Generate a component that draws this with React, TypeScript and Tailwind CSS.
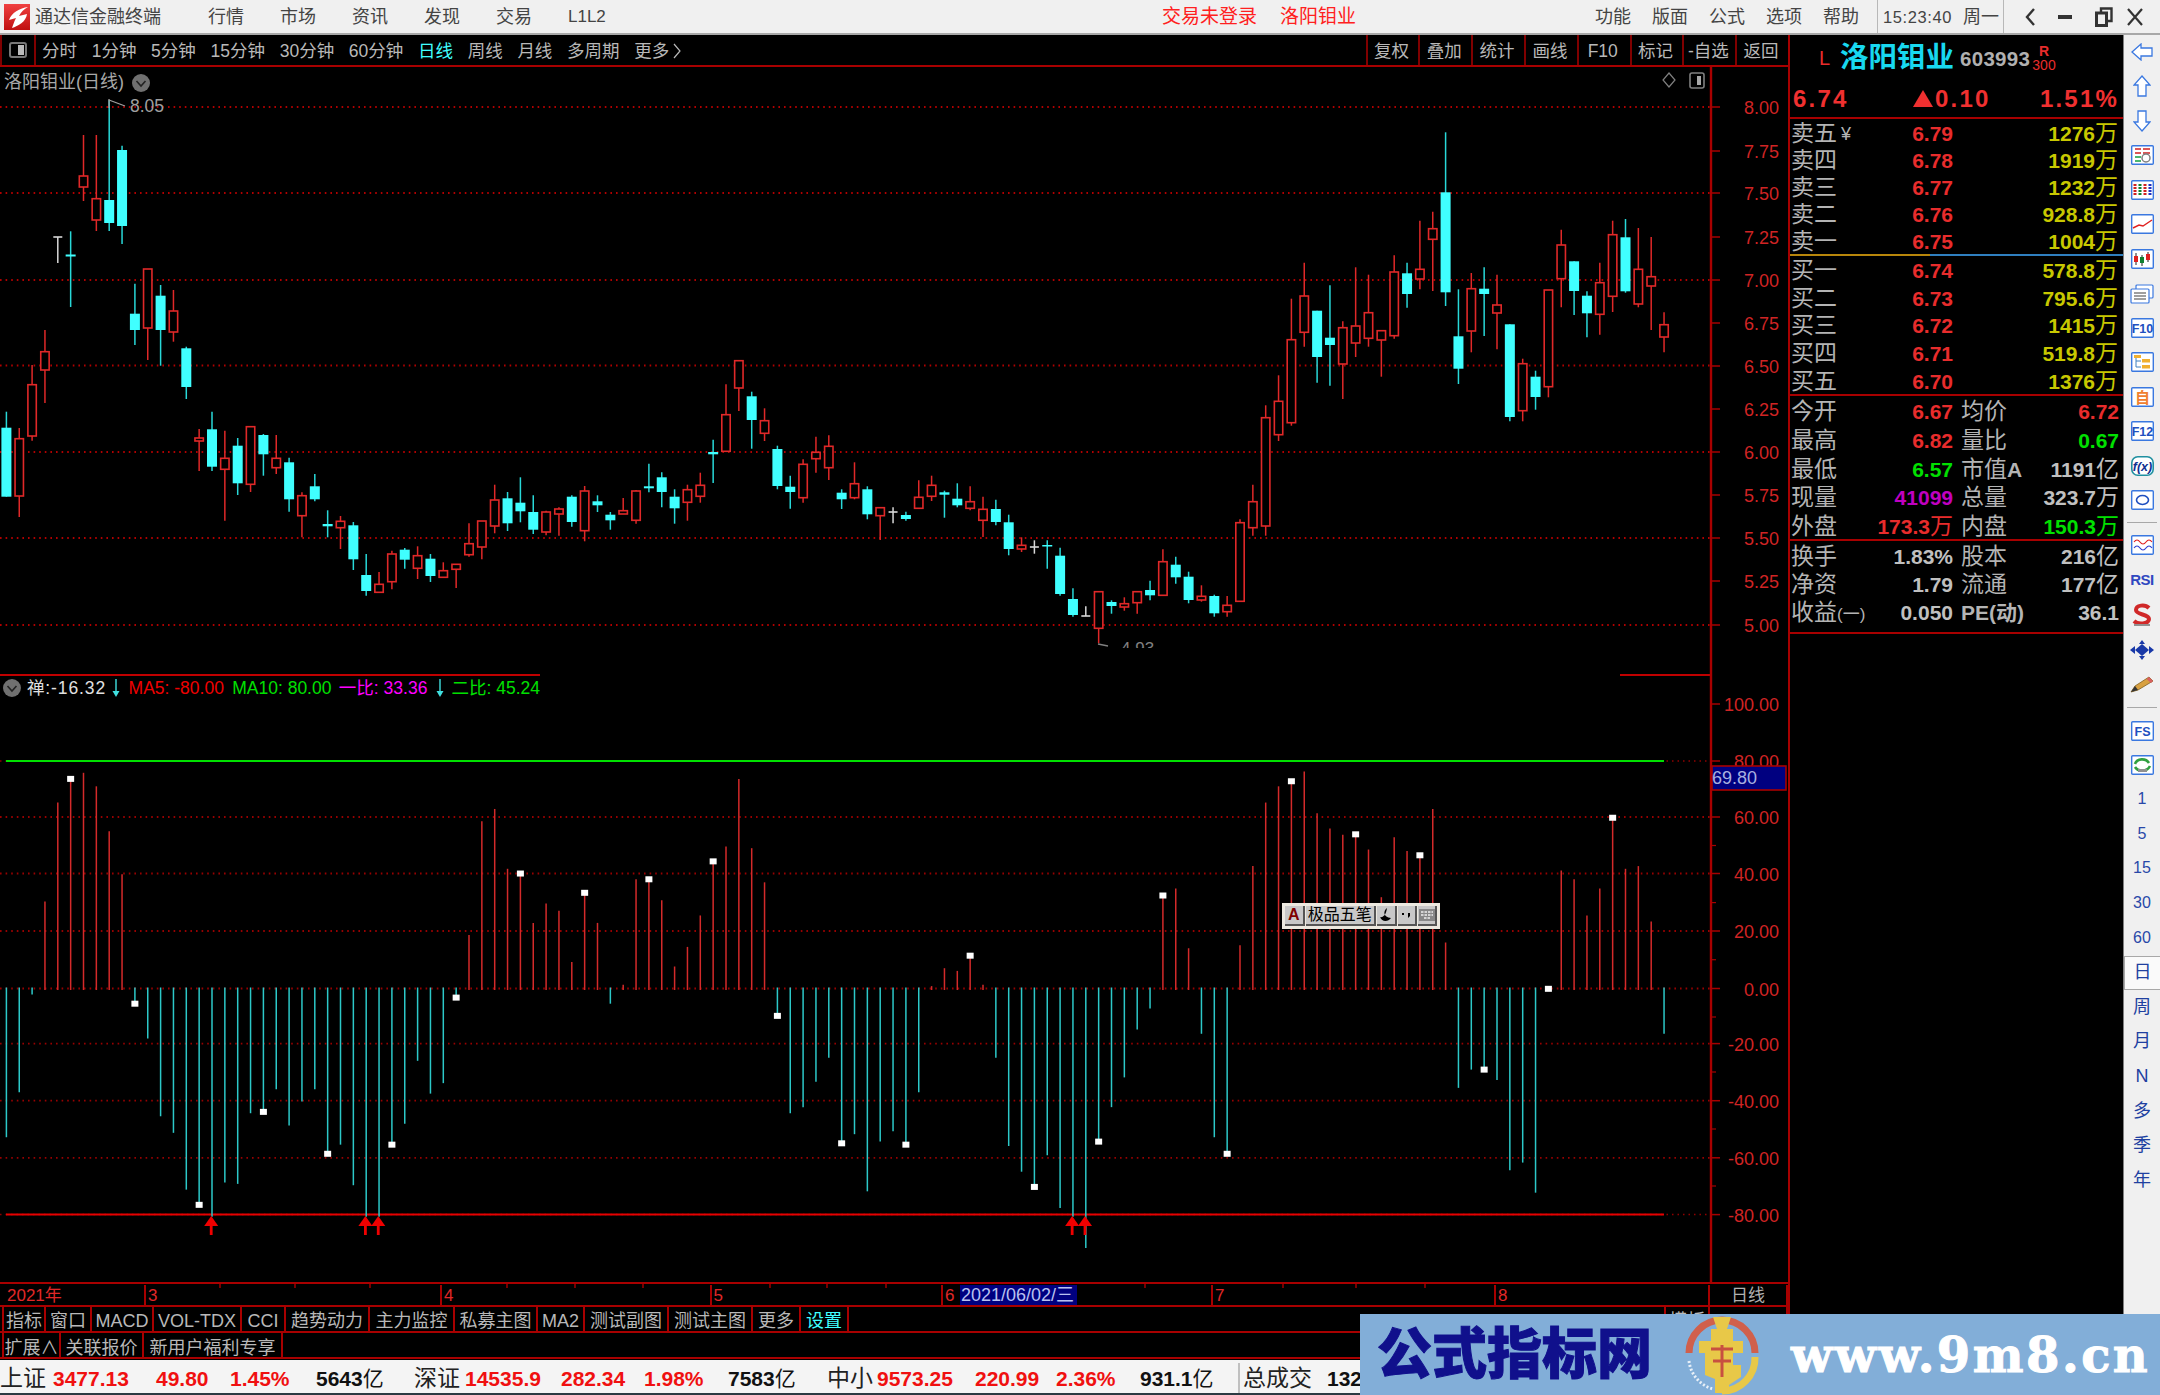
import type { ReactNode } from "react";

// candle rows: kind (c = cyan solid, r = red hollow, w = white doji), body top, body bottom, high, low
type Candle = ["c" | "r" | "w", number, number, number, number];
const candles: Candle[] = [
  ["c", 427.7, 496.7, 411.7, 496.7], ["r", 438.7, 496, 428, 517], ["r", 384.7, 436, 365, 440.7], ["r", 351.7, 370, 330, 403],
  ["w", 237, 237, 237, 263], ["c", 254.5, 256.5, 231.3, 307], ["r", 176, 187, 135, 201], ["r", 198.7, 220, 135, 231],
  ["c", 200, 223, 100, 231], ["c", 150, 226, 145.7, 244], ["c", 313.7, 330, 283.7, 345], ["r", 269, 328, 269, 360],
  ["c", 295.7, 330, 285, 365.7], ["r", 311, 332, 290, 341.7], ["c", 348.3, 387, 346.7, 399], ["r", 438, 441, 429, 471],
  ["c", 429.3, 466.7, 411.7, 471], ["r", 458.3, 469.3, 430.7, 520.7], ["c", 445.7, 483.3, 438, 495], ["r", 426.7, 484.3, 426.7, 492],
  ["c", 435, 454.3, 434, 475.7], ["r", 458.3, 467.7, 435, 474], ["c", 462.3, 499.3, 457.7, 511.7], ["r", 495.7, 515.7, 492.3, 537.3],
  ["c", 486.3, 499.3, 474, 501.3], ["c", 524, 526.3, 510.3, 537.3], ["r", 521.3, 527.7, 516, 549], ["c", 525.3, 559.3, 522, 570],
  ["c", 575, 591, 554, 595.7], ["r", 584.3, 592.3, 572, 592.3], ["r", 554, 581.7, 550.7, 589.3], ["c", 549.7, 559.7, 548, 568.7],
  ["r", 555.7, 568.3, 546.3, 579], ["c", 558.7, 576, 554, 582], ["r", 570.7, 577.3, 562.3, 577.3], ["r", 564.3, 569.3, 564.3, 588],
  ["r", 543.7, 554.7, 523.3, 556.7], ["r", 521, 547, 521, 559.3], ["r", 500, 526, 484.7, 533.3], ["c", 498.3, 523.3, 492, 531],
  ["c", 502.7, 511.3, 477.3, 522.3], ["c", 512, 529.7, 495.3, 534], ["r", 512, 532, 510.7, 535.3], ["r", 509, 514, 507.3, 535.7],
  ["c", 496.7, 522, 495.3, 526.7], ["r", 491, 530.7, 486, 541.3], ["c", 501.3, 505.3, 495.3, 512], ["c", 514.7, 520.3, 512, 529.7],
  ["r", 510.7, 514, 498, 514], ["r", 491, 520.3, 490, 523.7], ["c", 486.3, 488.3, 463.7, 492.3], ["c", 477.3, 492, 472.3, 507.3],
  ["c", 496.7, 508.3, 489.3, 523.7], ["r", 489.7, 502.3, 484.7, 520.7], ["r", 485.3, 496.3, 472.7, 502.7], ["c", 452, 454.3, 439.7, 483],
  ["r", 414.7, 451.3, 384.3, 451.3], ["r", 360.7, 388, 360.7, 411], ["c", 396.3, 420, 391.7, 448.7], ["r", 420.7, 433.3, 408.3, 441],
  ["c", 449, 486, 445.7, 489.3], ["c", 486.7, 492, 475.7, 508.7], ["r", 464.3, 497.7, 459.3, 502.7], ["r", 452.3, 458.7, 436.7, 472.7],
  ["r", 446.3, 467.7, 435.3, 480], ["c", 492.7, 499.3, 489.3, 509], ["r", 483.7, 497.7, 462.3, 499.3], ["c", 489.3, 514.3, 486.3, 519.3],
  ["r", 507.7, 515.7, 507.7, 540], ["w", 512, 512, 507.3, 523.3], ["c", 515, 519, 511.7, 520.7], ["r", 497.3, 508.3, 480.3, 508.3],
  ["r", 485.3, 496.3, 475.7, 501], ["c", 492.3, 494.7, 490.7, 517.7], ["c", 498.7, 505.3, 483.3, 507.3], ["r", 501.7, 508.3, 486.3, 510.3],
  ["r", 509.3, 520.3, 496.7, 537], ["c", 509, 522, 499.7, 525.3], ["c", 522.3, 549, 514.7, 555.3], ["r", 545.3, 549, 537.3, 552],
  ["w", 547, 547, 540.3, 553.7], ["c", 545, 546.5, 540.3, 568.7], ["c", 555.7, 594, 547.7, 595.7], ["c", 599, 615, 588.3, 616.7],
  ["w", 616, 616, 606.3, 616], ["r", 591.7, 628.3, 591.7, 643.3], ["c", 602, 606, 600.3, 613.7], ["r", 603.7, 607, 597.3, 610.7],
  ["r", 591.7, 602.7, 591.7, 613.7], ["c", 590, 595.3, 580.7, 600.3], ["r", 561.7, 595.3, 549.3, 595.3], ["c", 564.7, 577.3, 556.7, 583.7],
  ["c", 576.7, 600, 571.7, 603.3], ["r", 596.3, 600, 585.3, 601.7], ["c", 596, 613.3, 594.7, 616.7], ["r", 605.3, 611.7, 596, 616.7],
  ["r", 522.7, 601.3, 519.3, 601.3], ["r", 501.7, 527.7, 484.7, 535.7], ["r", 417.7, 526, 405.3, 535.7], ["r", 401.3, 434.7, 375.3, 441],
  ["r", 339.7, 422.7, 298.7, 425.7], ["r", 296, 332.3, 262.7, 346.7], ["c", 310.7, 357, 310.7, 382.7], ["c", 337.7, 345, 285.3, 385.7],
  ["r", 327.7, 364, 321.3, 399], ["r", 326, 343, 267.3, 357], ["r", 312.7, 338.3, 274.7, 346.7], ["r", 330.7, 340, 330.7, 376.7],
  ["r", 272, 335.7, 255.3, 338.7], ["c", 273.3, 294, 262.7, 307.7], ["r", 269.3, 279, 220.7, 289.3], ["r", 228.7, 239.3, 211.7, 291],
  ["c", 192.3, 292.3, 132.3, 306], ["c", 336.3, 368.7, 289.3, 384], ["r", 288.7, 331, 273, 352.3], ["c", 288.7, 294, 267.3, 336],
  ["r", 305, 313, 274.7, 349.3], ["c", 324.3, 417, 324.3, 421.3], ["r", 363.7, 410.7, 358.7, 421.3], ["c", 376.7, 397, 370.7, 409.7],
  ["r", 290, 386.7, 290, 397.3], ["r", 245, 278.7, 229.7, 307.3], ["c", 261.3, 291, 261.3, 315], ["c", 295.7, 313.3, 291.3, 337.3],
  ["r", 282.7, 314.3, 262.7, 334.7], ["r", 234.7, 296.3, 220.7, 312], ["c", 237.3, 291.3, 219, 292.7], ["r", 269.3, 304, 228, 307.3],
  ["r", 276.7, 286, 237, 330], ["r", 324.7, 337, 312.3, 352.3],
];

// lower pane: bar tips measured off the picture, 735 is the zero line
const tips = [
  1175, 1042, 753, 478, 185, 115, 97, 137, 270, 397, 780, 883, 1113, 1162, 1330, 1375, 1410, 1309, 1313, 1104,
  1100, 1033, 1140, 1069, 1033, 1224, 1197, 1317, 1410, 1410, 1197, 1135, 949, 1046, 1015, 762, 577, 240, 204, 381,
  395, 541, 484, 505, 657, 452, 541, 780, 724, 412, 412, 474, 670, 612, 519, 359, 315, 115, 320, 421,
  816, 1104, 1086, 1011, 940, 1193, 1166, 1335, 1188, 1157, 1197, 1042, 728, 675, 683, 638, 724, 940, 1201, 1277,
  1322, 1228, 1384, 1410, 1503, 1188, 1086, 998, 856, 794, 460, 439, 616, 869, 1175, 1224, 607, 373, 185, 137,
  122, 93, 217, 262, 280, 279, 324, 465, 288, 328, 341, 204, 599, 1029, 975, 975, 1006, 1273, 1250, 1339,
  736, 386, 412, 519, 439, 230, 381, 373, 537, 869,
];
const marked = [5, 10, 15, 20, 25, 30, 35, 40, 45, 50, 55, 60, 65, 70, 75, 80, 85, 90, 95, 100, 105, 110, 115, 120, 125];
const arrows = [16, 28, 29, 83, 84];

const barX = (i: number) => 6.4 + 12.85 * i;
const subY = (v: number) => 740 + v / 2.958;

const priceAxis = [
  ["8.00", 107], ["7.75", 151], ["7.50", 193], ["7.25", 237], ["7.00", 280], ["6.75", 323], ["6.50", 366],
  ["6.25", 409], ["6.00", 452], ["5.75", 495], ["5.50", 538], ["5.25", 581], ["5.00", 625],
] as const;
const subAxis = [
  ["100.00", 704], ["80.00", 761], ["60.00", 817], ["40.00", 873.5], ["20.00", 931], ["0.00", 988.5],
  ["-20.00", 1043.6], ["-40.00", 1100.7], ["-60.00", 1157.8], ["-80.00", 1214.6],
] as const;
const priceGrid = [107, 193, 280, 365.5, 452, 538, 625];
const subGrid = [817, 873.5, 931, 988.5, 1043.6, 1100.7, 1157.8];
const subMinor = [845.5, 902.6, 959.7, 1017, 1072, 1129, 1186];

const RED = "#e02828";
const CYAN = "#40ffff";
const DARK = "#a80000";

function Chart() {
  return (
    <svg className="absolute inset-0 h-full w-full" viewBox="0 67 1788 1215">
      <defs>
        <clipPath id="lowClip"><rect x="1090" y="630" width="80" height="18" /></clipPath>
      </defs>
      {priceGrid.map((y) => (
        <line key={y} x1="0" x2="1711" y1={y} y2={y} stroke="#b00000" strokeWidth="1.8" strokeDasharray="1.6 4" />
      ))}
      {subGrid.map((y) => (
        <line key={y} x1="0" x2="1711" y1={y} y2={y} stroke="#980000" strokeWidth="1.8" strokeDasharray="1.6 4" />
      ))}
      <line x1="0" x2="1711" y1="761" y2="761" stroke="#900000" strokeWidth="1.5" strokeDasharray="1.5 4" />
      <line x1="0" x2="1711" y1="1214.6" y2="1214.6" stroke="#900000" strokeWidth="1.5" strokeDasharray="1.5 4" />

      {/* candles */}
      {candles.map(([kind, top, bot, hi, lo], i) => {
        const x = barX(i);
        const wick = kind === "c" ? "#28d8d8" : kind === "r" ? RED : "#d8d8d8";
        return (
          <g key={i}>
            <line x1={x} x2={x} y1={hi} y2={lo} stroke={wick} strokeWidth="1.5" />
            {kind === "c" && <rect x={x - 5} y={top} width="10" height={bot - top} fill={CYAN} />}
            {kind === "r" && <rect x={x - 4.2} y={top} width="8.4" height={bot - top} fill="#000" stroke={RED} strokeWidth="1.6" />}
            {kind === "w" && <line x1={x - 4.5} x2={x + 4.5} y1={top} y2={top} stroke="#d8d8d8" strokeWidth="1.6" />}
          </g>
        );
      })}

      {/* high / low notes */}
      <path d="M109 108 L109 99 M109 100 L125 106" stroke="#a0a0a0" strokeWidth="1.3" fill="none" />
      <text x="130" y="112" fontSize="17.5" fill="#a0a0a0">8.05</text>
      <g clipPath="url(#lowClip)">
        <text x="1121" y="654" fontSize="17" fill="#808080">4.93</text>
        <line x1="1098" x2="1108" y1="644" y2="646" stroke="#808080" strokeWidth="1.3" />
      </g>

      {/* chart corner buttons */}
      <path d="M1669 73 L1675 80 L1669 87 L1663 80 Z" fill="none" stroke="#808080" strokeWidth="1.2" />
      <rect x="1690" y="73" width="14" height="15" rx="2" fill="none" stroke="#808080" strokeWidth="1.6" />
      <rect x="1697" y="76" width="4" height="9" fill="#a8a8a8" />

      {/* pane separator */}
      <line x1="0" x2="540" y1="675" y2="675" stroke="#c00000" strokeWidth="2" />
      <line x1="1620" x2="1711" y1="675" y2="675" stroke="#c00000" strokeWidth="2" />

      {/* lower pane */}
      <line x1="6" x2="1664" y1="761" y2="761" stroke="#00e000" strokeWidth="2" />
      <line x1="6" x2="1664" y1="1214.6" y2="1214.6" stroke="#e60000" strokeWidth="2" />
      {tips.map((v, i) => {
        const x = barX(i);
        const up = v < 735;
        return (
          <line key={i} x1={x} x2={x} y1={up ? 990 : 987.5} y2={subY(v)} stroke={up ? "#d42a2a" : "#2cc8c8"} strokeWidth="1.5" />
        );
      })}
      {marked.map((i) => (
        <rect key={i} x={barX(i) - 3.5} y={subY(tips[i]) - 3} width="7" height="6" fill="#fff" />
      ))}
      {arrows.map((i) => {
        const x = barX(i) - 0.8;
        return (
          <g key={i} fill="#f00000">
            <path d={`M${x} 1216 L${x + 7} 1226 L${x - 7} 1226 Z`} />
            <rect x={x - 1.4} y="1225" width="2.8" height="10" />
          </g>
        );
      })}

      {/* axes */}
      <line x1="1711" x2="1711" y1="67" y2="1282" stroke={DARK} strokeWidth="2.4" />
      {priceAxis.map(([t, y]) => (
        <g key={t}>
          <line x1="1711" x2="1720" y1={y} y2={y} stroke={DARK} strokeWidth="1.5" />
          <text x="1779" y={y + 7} fontSize="18" textAnchor="end" fill="#d02424">{t}</text>
        </g>
      ))}
      {subAxis.map(([t, y]) => (
        <g key={t}>
          <line x1="1711" x2="1720" y1={y} y2={y} stroke={DARK} strokeWidth="1.5" />
          <text x="1779" y={y + 7} fontSize="18" textAnchor="end" fill="#d02424">{t}</text>
        </g>
      ))}
      {subMinor.map((y) => (
        <line key={y} x1="1711" x2="1716" y1={y} y2={y} stroke={DARK} strokeWidth="1.2" />
      ))}
      <rect x="1712" y="766" width="74" height="24" fill="#000080" stroke={DARK} strokeWidth="1.6" />
      <text x="1712" y="784" fontSize="18" fill="#a8b0e0">69.80</text>
    </svg>
  );
}

function Chevron() {
  return (
    <svg width="18" height="18" viewBox="0 0 18 18">
      <circle cx="9" cy="9" r="9" fill="#707070" />
      <path d="M4.5 7 L9 12 L13.5 7" fill="none" stroke="#222" strokeWidth="1.6" />
    </svg>
  );
}

function DownTick() {
  return (
    <svg width="8" height="20" viewBox="0 0 8 20">
      <path d="M4 1 V14" stroke="#40e0e0" strokeWidth="1.4" />
      <path d="M0.5 13 H7.5 L4 19 Z" fill="#40e0e0" />
    </svg>
  );
}

function ImeBar() {
  const key = "flex h-full items-center justify-center border-r-2 border-b-2 border-r-[#555] border-b-[#555] bg-[#c8c8c8]";
  return (
    <div className="absolute left-[1282px] top-[836px] flex h-[26px] w-[158px] gap-[1px] border-[3px] border-[#ece9e0] bg-[#ece9e0] text-[16px] text-black">
      <div className={`${key} w-[20px] font-bold text-[#800000]`}>A</div>
      <div className={`${key} w-[71px]`}>极品五笔</div>
      <div className={`${key} w-[20px]`}>
        <svg width="12" height="14" viewBox="0 0 12 14"><path d="M7 0 C3 3 3 9 11 10 C8 14 2 14 0 9 C2 10 6 8 7 0Z" fill="#000" /></svg>
      </div>
      <div className={`${key} w-[20px]`}>
        <svg width="10" height="10" viewBox="0 0 10 10"><rect x="1" y="3" width="2" height="2" fill="#000" /><path d="M7 3 h2 v3 l-2 2Z" fill="#000" /></svg>
      </div>
      <div className={`${key} w-[19px]`}>
        <svg width="16" height="12" viewBox="0 0 16 12">
          <rect width="16" height="12" fill="#888" />
          <path d="M2 3 H14 M2 6 H14 M5 9 H11" stroke="#eee" strokeWidth="1.4" strokeDasharray="2.5 1" />
        </svg>
      </div>
    </div>
  );
}

function TitleBar() {
  return (
    <div className="flex h-[35px] items-center border-b-2 border-[#a8a8a8] bg-[#f0f0f0] text-[18px] text-[#444]">
      <div className="flex w-[1162px] items-center">
        <svg className="ml-[4px]" width="26" height="26" viewBox="0 0 26 26">
          <defs>
            <linearGradient id="logoRed" x1="0" y1="0" x2="0" y2="1">
              <stop offset="0" stopColor="#f04040" />
              <stop offset="1" stopColor="#c01010" />
            </linearGradient>
          </defs>
          <rect width="26" height="26" fill="url(#logoRed)" />
          <path d="M24 3 C16 4 7 9 5 16 L12 14 C10 18 9 21 8 24 C14 22 22 18 23 10 L15 12 C17 8 20 5 24 3Z" fill="#fff" />
        </svg>
        <span className="ml-[5px] mt-[2px] w-[127px]">通达信金融终端</span>
        <div className="ml-[46px] mt-[2px] flex gap-[36px]">
          <span>行情</span><span>市场</span><span>资讯</span><span>发现</span><span>交易</span><span className="text-[17px]">L1L2</span>
        </div>
      </div>
      <div className="mt-[2px] flex w-[433px] gap-[23px] text-[19px] text-[#ff2020]">
        <span>交易未登录</span><span>洛阳钼业</span>
      </div>
      <div className="mt-[2px] flex gap-[21px]">
        <span>功能</span><span>版面</span><span>公式</span><span>选项</span><span>帮助</span>
      </div>
      <div className="ml-[18px] flex h-full items-center border-x border-[#b8b8b8] pl-[5px] pr-[4px] pt-[2px]">
        <span className="w-[80px] text-[16.5px] tracking-[0.6px]">15:23:40</span>
        <span>周一</span>
      </div>
      <svg className="ml-[20px]" width="12" height="20" viewBox="0 0 12 20"><path d="M10 2 L3 10 L10 18" fill="none" stroke="#333" strokeWidth="2.4" /></svg>
      <svg className="ml-[22px]" width="14" height="4" viewBox="0 0 14 4"><rect width="14" height="4" fill="#333" /></svg>
      <svg className="ml-[23px]" width="18" height="20" viewBox="0 0 18 20">
        <path d="M6 5 V1.5 H16.5 V14 H12" fill="none" stroke="#333" strokeWidth="2.4" />
        <rect x="1.5" y="6" width="10" height="12.5" fill="none" stroke="#333" strokeWidth="3" />
      </svg>
      <svg className="ml-[14px]" width="16" height="20" viewBox="0 0 16 20"><path d="M1 2 L15 18 M15 2 L1 18" stroke="#333" strokeWidth="2.2" /></svg>
    </div>
  );
}

const rightTools = ["复权", "叠加", "统计", "画线", "F10", "标记", "-自选", "返回"];

function Toolbar() {
  return (
    <div className="flex h-[32px] items-center border-b-2 border-[#a80000] text-[17.5px] text-[#b8b8b8]">
      <div className="flex h-full w-[36px] items-center justify-center border-x-2 border-[#800000]">
        <div className="flex h-[16px] w-[18px] justify-end rounded-[3px] border-2 border-[#777] pr-[1px] pt-[1px]">
          <div className="h-[10px] w-[6px] bg-[#bbb]" />
        </div>
      </div>
      <div className="ml-[6px] mt-[2px] flex items-center gap-[14.7px]">
        <span>分时</span><span>1分钟</span><span>5分钟</span><span>15分钟</span><span>30分钟</span><span>60分钟</span>
        <span className="text-[#40ffff]">日线</span><span>周线</span><span>月线</span><span>多周期</span>
        <span className="flex items-center gap-[4px]">
          更多
          <svg width="8" height="16" viewBox="0 0 8 16"><path d="M1 1 L7 8 L1 15" fill="none" stroke="#b8b8b8" strokeWidth="1.2" /></svg>
        </span>
      </div>
      <div className="ml-auto flex h-full">
        {rightTools.map((t) => (
          <div key={t} className="flex h-full w-[52.8px] items-center justify-center border-l-2 border-[#800000] pr-[3px] pt-[2px]">{t}</div>
        ))}
      </div>
    </div>
  );
}

function TimeAxis() {
  return (
    <div className="relative flex h-[25px] border-y-2 border-[#a80000] pt-[1px] text-[17px] leading-[21px] text-[#e02828]">
      <div className="w-[146px] border-r-2 border-[#a80000] pl-[7px]">2021年</div>
      <div className="w-[296px] border-r-2 border-[#a80000] pl-[2px]">3</div>
      <div className="w-[269.6px] border-r-2 border-[#a80000] pl-[2px]">4</div>
      <div className="w-[231.4px] border-r-2 border-[#a80000] pl-[2px]">5</div>
      <div className="w-[17px] pl-[2px]">6</div>
      <div className="w-[117px] whitespace-nowrap bg-[#000080] pl-[1px] text-[18px] text-[#b8c0f0]">2021/06/02/三</div>
      <div className="w-[136px] border-r-2 border-[#a80000]" />
      <div className="w-[283px] border-r-2 border-[#a80000] pl-[2px]">7</div>
      <div className="w-[214px] border-r-2 border-[#a80000] pl-[2px]">8</div>
      <div className="flex w-[78px] justify-center border-r-2 border-[#a80000] text-[#b0b0b0]">日线</div>
      <svg className="absolute left-0 top-0 h-[4px] w-[1500px]" viewBox="0 0 1500 4">
        {[220, 295, 370, 507, 575, 643, 770, 827, 886, 1145, 1283, 1356, 1425].map((x) => (
          <line key={x} x1={x} x2={x} y1="0" y2="4" stroke="#a80000" strokeWidth="1.4" />
        ))}
      </svg>
    </div>
  );
}

const tabRow1 = [
  { t: "指标", w: "w-[42px]" }, { t: "窗口", w: "w-[46px]" }, { t: "MACD", w: "w-[62px]" }, { t: "VOL-TDX", w: "w-[88px]" },
  { t: "CCI", w: "w-[44px]" }, { t: "趋势动力", w: "w-[84px]" }, { t: "主力监控", w: "w-[85px]" }, { t: "私募主图", w: "w-[83px]" },
  { t: "MA2", w: "w-[47px]" }, { t: "测试副图", w: "w-[84px]" }, { t: "测试主图", w: "w-[84px]" }, { t: "更多", w: "w-[48px]" },
];
const tabRow2 = [
  { t: "扩展∧", w: "w-[57px]" }, { t: "关联报价", w: "w-[83px]" }, { t: "新用户福利专享", w: "w-[139px]" },
];

function Tabs() {
  const cell = "flex h-full items-center justify-center border-r-2 border-[#a80000] overflow-hidden whitespace-nowrap";
  return (
    <div className="text-[18px] text-[#b8b8b8]">
      <div className="flex h-[26px] border-b-2 border-[#a80000] pl-[2px]">
        <div className="h-full w-0 border-l-2 border-[#a80000]" />
        {tabRow1.map((c) => (
          <div key={c.t} className={`${cell} ${c.w} pt-[4px]`}>{c.t}</div>
        ))}
        <div className={`${cell} w-[48px] pt-[4px] text-[#40ffff]`}>设置</div>
        <div className={`${cell} ml-auto w-[46px] border-l-2 pt-[4px]`}>模板</div>
        <div className={`${cell} w-[78px] pt-[4px]`}>+</div>
      </div>
      <div className="flex h-[26px] border-b-2 border-[#a80000] pl-[2px]">
        <div className="h-full w-0 border-l-2 border-[#a80000]" />
        {tabRow2.map((c) => (
          <div key={c.t} className={`${cell} ${c.w} pt-[6px]`}>{c.t}</div>
        ))}
      </div>
    </div>
  );
}

function Unit({ n, u }: { n: string; u: string }) {
  return (
    <>
      {n}
      <span className="text-[23px] font-normal">{u}</span>
    </>
  );
}

const asks = [
  ["卖五", "6.79", "1276"], ["卖四", "6.78", "1919"], ["卖三", "6.77", "1232"], ["卖二", "6.76", "928.8"], ["卖一", "6.75", "1004"],
];
const bids = [
  ["买一", "6.74", "578.8"], ["买二", "6.73", "795.6"], ["买三", "6.72", "1415"], ["买四", "6.71", "519.8"], ["买五", "6.70", "1376"],
];

function QuoteRow({ row, extra }: { row: string[]; extra?: ReactNode }) {
  return (
    <div className="flex h-[27px] items-center pl-[1px] pr-[5px] pt-[2px] leading-none">
      <span className="flex w-[62px] items-center whitespace-nowrap text-[23px] text-[#b4b4b4]">{row[0]}{extra}</span>
      <span className="w-[100px] text-right text-[21px] font-bold text-[#e82c2c]">{row[1]}</span>
      <span className="flex-1 text-right text-[21px] font-bold text-[#c8c800]"><Unit n={row[2]} u="万" /></span>
    </div>
  );
}

type Stat = { a: ReactNode; av: ReactNode; ac: string; b: ReactNode; bv: ReactNode; bc: string };

function StatRow({ a, av, ac, b, bv, bc, h }: Stat & { h: string }) {
  return (
    <div className={`flex items-center pl-[1px] pr-[4px] pt-[3px] leading-none ${h}`}>
      <span className="w-[62px] whitespace-nowrap text-[23px] text-[#b4b4b4]">{a}</span>
      <span className={`w-[100px] whitespace-nowrap text-right text-[21px] font-bold ${ac}`}>{av}</span>
      <span className="ml-[8px] w-[70px] whitespace-nowrap text-[23px] text-[#b4b4b4]">{b}</span>
      <span className={`flex-1 whitespace-nowrap text-right text-[21px] font-bold ${bc}`}>{bv}</span>
    </div>
  );
}

const grey = "text-[#c0c0c0]";
const redText = "text-[#e82c2c]";
const greenText = "text-[#00e000]";

function QuotePanel() {
  return (
    <div className="flex w-[335px] flex-col border-l-2 border-[#a80000] bg-black">
      <div className="flex h-[45px] items-center pl-[29px]">
        <span className="w-[21px] text-[20px] text-[#e82c2c]">L</span>
        <span className="w-[120px] text-[28.5px] font-bold leading-none text-[#18d8f0]">洛阳钼业</span>
        <span className="mt-[4px] w-[72px] text-[20.5px] font-bold tracking-[0.3px] text-[#b0b0b0]">603993</span>
        <span className="flex w-[24px] flex-col items-center text-[14px] leading-[14px] text-[#e82c2c]">
          <span className="font-bold">R</span>
          <span>300</span>
        </span>
      </div>
      <div className="flex h-[39px] items-center border-b-2 border-[#a80000] pl-[3px] pr-[4px] text-[24px] font-bold tracking-[2.2px] text-[#f03030]">
        <span className="w-[120px]">6.74</span>
        <span className="flex w-[100px] items-center whitespace-nowrap">
          <svg className="mr-[2px]" width="20" height="17" viewBox="0 0 20 17"><path d="M10 0 L20 17 H0 Z" fill="#f03030" /></svg>
          0.10
        </span>
        <span className="flex-1 text-right">1.51%</span>
      </div>
      {asks.map((r, i) => (
        <QuoteRow key={r[0]} row={r} extra={i === 0 ? <span className="ml-[4px] text-[18px]">¥</span> : undefined} />
      ))}
      <div className="flex h-[2px]">
        <div className="w-[140px] bg-[#b8860b]" />
        <div className="flex-1 bg-[#2f7fbf]" />
      </div>
      <div className="flex h-[138px] flex-col justify-around">
        {bids.map((r) => <QuoteRow key={r[0]} row={r} />)}
      </div>
      <div className="h-[2px] bg-[#a80000]" />
      <StatRow h="h-[28.7px]" a="今开" av="6.67" ac={redText} b="均价" bv="6.72" bc={redText} />
      <StatRow h="h-[28.7px]" a="最高" av="6.82" ac={redText} b="量比" bv="0.67" bc={greenText} />
      <StatRow h="h-[28.7px]" a="最低" av="6.57" ac={greenText} b={<>市值<span className="text-[21px] font-bold">A</span></>} bv={<Unit n="1191" u="亿" />} bc={grey} />
      <StatRow h="h-[28.7px]" a="现量" av="41099" ac="text-[#c000c0]" b="总量" bv={<Unit n="323.7" u="万" />} bc={grey} />
      <StatRow h="h-[28.7px]" a="外盘" av={<Unit n="173.3" u="万" />} ac={redText} b="内盘" bv={<Unit n="150.3" u="万" />} bc={greenText} />
      <div className="h-[2px] bg-[#a80000]" />
      <StatRow h="h-[28px]" a="换手" av="1.83%" ac={grey} b="股本" bv={<Unit n="216" u="亿" />} bc={grey} />
      <StatRow h="h-[28px]" a="净资" av="1.79" ac={grey} b="流通" bv={<Unit n="177" u="亿" />} bc={grey} />
      <StatRow h="h-[28px]" a={<>收益<span className="text-[17px]">(一)</span></>} av="0.050" ac={grey} b={<span className="text-[21px] font-bold">PE(动)</span>} bv="36.1" bc={grey} />
      <div className="mt-[7px] h-[2px] bg-[#a80000]" />
    </div>
  );
}

const BLUE = "#3a78e0";

function BoxIcon({ children, w = 23 }: { children: ReactNode; w?: number }) {
  return (
    <svg width={w} height="20" viewBox="0 0 23 20">
      <rect x="0.7" y="0.7" width="21.6" height="18.6" rx="1" fill="#fff" stroke={BLUE} strokeWidth="1.4" />
      {children}
    </svg>
  );
}

const sideIcons: { key: string; h: string; node: ReactNode }[] = [
  { key: "left", h: "h-[34px]", node: <svg width="22" height="18" viewBox="0 0 22 18"><path d="M1 9 L10 1 V5 H21 V13 H10 V17 Z" fill="#fff" stroke={BLUE} strokeWidth="1.3" /></svg> },
  { key: "up", h: "h-[34px]", node: <svg width="18" height="22" viewBox="0 0 18 22"><path d="M9 1 L17 10 H13 V21 H5 V10 H1 Z" fill="#fff" stroke={BLUE} strokeWidth="1.3" /></svg> },
  { key: "down", h: "h-[35px]", node: <svg width="18" height="22" viewBox="0 0 18 22"><path d="M9 21 L17 12 H13 V1 H5 V12 H1 Z" fill="#fff" stroke={BLUE} strokeWidth="1.3" /></svg> },
  { key: "table", h: "h-[34px]", node: <BoxIcon><path d="M4 4 H10 M12 4 H19 M4 8 H10 M12 8 H19" stroke="#d02020" strokeWidth="1.6" /><path d="M4 12 H10 M4 16 H10" stroke="#10a040" strokeWidth="1.6" /><circle cx="15" cy="13" r="4" fill="none" stroke="#808080" strokeWidth="1.5" /></BoxIcon> },
  { key: "grid", h: "h-[35px]", node: <BoxIcon><path d="M4 4 V16" stroke="#d02020" strokeWidth="3" strokeDasharray="2 1" /><path d="M9 4 V16" stroke="#108030" strokeWidth="3" strokeDasharray="2 1" /><path d="M14 4 V16" stroke="#d02020" strokeWidth="3" strokeDasharray="2 1" /><path d="M19 4 V16" stroke="#2030c0" strokeWidth="3" strokeDasharray="2 1" /></BoxIcon> },
  { key: "line", h: "h-[34px]", node: <BoxIcon><path d="M2 14 L8 11 L12 12 L21 6" fill="none" stroke="#e02020" strokeWidth="1.4" /></BoxIcon> },
  { key: "candle", h: "h-[35px]", node: <BoxIcon><path d="M5 4 V16 M11 6 V17 M17 3 V13" stroke="#222" strokeWidth="1" /><rect x="3" y="7" width="4" height="6" fill="#e02020" /><rect x="9" y="8" width="4" height="6" fill="#108030" /><rect x="15" y="5" width="4" height="6" fill="#e02020" /></BoxIcon> },
  { key: "pages", h: "h-[35px]", node: <svg width="24" height="20" viewBox="0 0 24 20"><rect x="6" y="1" width="17" height="13" rx="1" fill="#fff" stroke={BLUE} strokeWidth="1.2" /><rect x="1" y="5" width="18" height="14" rx="1" fill="#fff" stroke={BLUE} strokeWidth="1.2" /><path d="M4 9 H16 M4 12 H16 M4 15 H16" stroke="#808080" strokeWidth="1.4" /></svg> },
  { key: "f10", h: "h-[34px]", node: <BoxIcon><text x="11.5" y="15" fontSize="12.5" textAnchor="middle" fill="#2050c0" fontWeight="bold">F10</text></BoxIcon> },
  { key: "tree", h: "h-[34px]", node: <BoxIcon><path d="M5 5 V15 H10 M5 9 H10" fill="none" stroke="#4080c0" strokeWidth="1" /><rect x="3" y="3" width="7" height="3" fill="#f0b030" /><rect x="11" y="7" width="8" height="3.5" fill="#f0b030" /><rect x="11" y="13" width="8" height="3.5" fill="#f0b030" /></BoxIcon> },
  { key: "self", h: "h-[35px]", node: <BoxIcon><text x="11.5" y="16" fontSize="15" textAnchor="middle" fill="#f08030" fontWeight="bold">自</text></BoxIcon> },
  { key: "f12", h: "h-[34px]", node: <BoxIcon><text x="11.5" y="15" fontSize="12.5" textAnchor="middle" fill="#2050c0" fontWeight="bold">F12</text></BoxIcon> },
  { key: "fx", h: "h-[35px]", node: <svg width="23" height="20" viewBox="0 0 23 20"><rect x="0.8" y="0.8" width="21.4" height="18.4" rx="6" fill="#fff" stroke="#2090a0" strokeWidth="1.6" /><text x="11.5" y="15" fontSize="12.5" fontStyle="italic" textAnchor="middle" fill="#103090" fontWeight="bold">f(x)</text></svg> },
  { key: "circle", h: "h-[34px]", node: <BoxIcon><ellipse cx="11.5" cy="10" rx="6" ry="4.5" fill="none" stroke="#2050c0" strokeWidth="1.6" /></BoxIcon> },
  { key: "sep1", h: "h-[10px]", node: <div className="h-[1px] w-[30px] bg-[#a8a8a8]" /> },
  { key: "wave", h: "h-[36px]", node: <BoxIcon><path d="M3 7 Q6 3 9 7 T15 7 T21 7" fill="none" stroke="#e02020" strokeWidth="1.2" /><path d="M3 13 Q6 9 9 13 T15 13 T21 13" fill="none" stroke="#3040d0" strokeWidth="1.2" /></BoxIcon> },
  { key: "rsi", h: "h-[34px]", node: <span className="text-[15px] font-bold tracking-[-0.5px] text-[#3048c0]">RSI</span> },
  { key: "s", h: "h-[36px]", node: <svg width="22" height="24" viewBox="0 0 22 24"><path d="M18 5 C14 1 5 2 5 7 C5 12 18 11 18 16 C18 21 7 22 3 18" fill="none" stroke="#d02828" strokeWidth="4" /><path d="M3 22 H19" stroke="#909090" strokeWidth="2" /></svg> },
  { key: "move", h: "h-[34px]", node: <svg width="24" height="20" viewBox="0 0 24 20" fill="#1838a8"><path d="M12 0 L15 4 H9 Z M12 20 L9 16 H15 Z M0 10 L5 6 V14 Z M24 10 L19 14 V6 Z" /><path d="M12 4 L19 10 L12 16 L5 10 Z" /></svg> },
  { key: "pencil", h: "h-[34px]", node: <svg width="24" height="18" viewBox="0 0 24 18"><path d="M1 17 L5 11 L19 2 L23 6 L8 15 Z" fill="#d8a040" stroke="#806020" strokeWidth="0.8" /><path d="M19 2 L23 6 L21 8 L16.5 4 Z" fill="#d86060" /><path d="M1 17 L5 11 L8 15 Z" fill="#333" /></svg> },
  { key: "sep2", h: "h-[12px]", node: <div className="h-[1px] w-[30px] bg-[#a8a8a8]" /> },
  { key: "fs", h: "h-[35px]", node: <BoxIcon><text x="11.5" y="15" fontSize="12.5" textAnchor="middle" fill="#2050c0" fontWeight="bold">FS</text></BoxIcon> },
  { key: "sync", h: "h-[34px]", node: <BoxIcon><path d="M4 9 C6 3 15 3 18 8 M19 11 C16 17 7 17 4 12" fill="none" stroke="#30a040" strokeWidth="2.6" /><rect x="7" y="14" width="9" height="3" fill="#909090" /></BoxIcon> },
];

const periods = ["1", "5", "15", "30", "60"];
const spans = ["周", "月", "N", "多", "季", "年"];

function Sidebar() {
  return (
    <div className="flex w-[37px] flex-col items-center border-l border-[#808080] bg-[#f0f0f0]">
      {sideIcons.map((s) => (
        <div key={s.key} className={`flex w-full items-center justify-center ${s.h}`}>{s.node}</div>
      ))}
      {periods.map((p) => (
        <div key={p} className="flex h-[34.6px] w-full items-center justify-center text-[16px] text-[#2848a8]">{p}</div>
      ))}
      <div className="mt-[1px] flex h-[34px] w-full items-center justify-center border-y border-l border-[#a8a8a8] bg-[#fafafa] text-[18px] text-[#2040a0]">日</div>
      {spans.map((p) => (
        <div key={p} className="flex h-[34.6px] w-full items-center justify-center text-[18px] text-[#2040a0]">{p}</div>
      ))}
    </div>
  );
}

function StatusBar() {
  const r = "text-[21px] font-bold text-[#f01010]";
  const k = "text-[21px] font-bold text-[#111]";
  const label = "text-[23px] text-[#222]";
  return (
    <div className="flex h-[35px] items-center overflow-hidden whitespace-nowrap border-b-2 border-[#2b3a42] bg-[#f4f4f4] pt-[3px] leading-none">
      <span className={`${label} w-[53px]`}>上证</span>
      <span className={`${r} w-[103px]`}>3477.13</span>
      <span className={`${r} w-[74px]`}>49.80</span>
      <span className={`${r} w-[86px]`}>1.45%</span>
      <span className={`${k} w-[98px]`}>5643<span className="font-normal">亿</span></span>
      <span className={`${label} w-[51px]`}>深证</span>
      <span className={`${r} w-[96px]`}>14535.9</span>
      <span className={`${r} w-[83px]`}>282.34</span>
      <span className={`${r} w-[84px]`}>1.98%</span>
      <span className={`${k} w-[99px]`}>7583<span className="font-normal">亿</span></span>
      <span className={`${label} w-[50px]`}>中小</span>
      <span className={`${r} w-[98px]`}>9573.25</span>
      <span className={`${r} w-[81px]`}>220.99</span>
      <span className={`${r} w-[84px]`}>2.36%</span>
      <span className={`${k} w-[98px]`}>931.1<span className="font-normal">亿</span></span>
      <div className="h-full w-[2px] bg-[#c0c0c0]" />
      <span className={`${label} ml-[3px] w-[84px]`}>总成交</span>
      <span className={k}>132</span>
    </div>
  );
}

function Watermark() {
  return (
    <div className="absolute bottom-0 left-[1360px] flex h-[81px] w-[800px] items-center bg-[#82aed8]">
      <span className="ml-[17px] w-[277px] whitespace-nowrap text-[55px] font-black leading-none text-[#10108c] [-webkit-text-stroke:1px_#10108c]">公式指标网</span>
      <svg className="ml-[29px]" width="78" height="80" viewBox="0 0 78 80">
        <path d="M6 38 A33 33 0 0 1 72 38" fill="none" stroke="#d0604c" strokeWidth="7" />
        <path d="M72 42 A33 33 0 0 1 39 76" fill="none" stroke="#e8c848" strokeWidth="7" />
        <path d="M30 2 H48 L44 14 H50 V26 H60 V38 H50 V50 H58 V62 L46 70 V78 H32 V64 L22 60 V38 H16 V26 H28 V14 H34 Z" fill="#e8c848" />
        <path d="M28 34 H50 M30 46 H48 M39 30 V62" stroke="#c85040" strokeWidth="3" fill="none" />
        <path d="M6 46 A33 33 0 0 0 30 74" fill="none" stroke="#e8f0f8" strokeWidth="3" strokeDasharray="2 2" />
      </svg>
      <span className="ml-[30px] whitespace-nowrap font-['DejaVu_Serif',serif] text-[48px] font-bold leading-none tracking-[2.5px] text-white [-webkit-text-stroke:1px_white]">www.9m8.cn</span>
    </div>
  );
}

export default function App() {
  return (
    <div className="relative flex h-[1395px] w-[2160px] flex-col overflow-hidden bg-black font-['Liberation_Sans','Noto_Sans_CJK_SC',sans-serif]">
      <TitleBar />
      <div className="flex h-[1325px]">
        <div className="flex w-[1788px] flex-col">
          <Toolbar />
          <div className="relative h-[1215px]">
            <Chart />
            <div className="absolute left-[4px] top-[2px] flex items-center gap-[8px] text-[18px] text-[#a8a8a8]">
              <span>洛阳钼业(日线)</span>
              <Chevron />
            </div>
            <div className="absolute left-0 top-[609px] flex h-[24px] w-[540px] items-center overflow-hidden whitespace-nowrap pl-[3px] text-[17.5px]">
              <Chevron />
              <span className="ml-[6px] w-[85px] tracking-[0.9px] text-[#e0e0e0]">禅:-16.32</span>
              <span className="w-[17px]"><DownTick /></span>
              <span className="w-[104px] text-[#f00000]">MA5: -80.00</span>
              <span className="w-[107px] text-[#00e000]">MA10: 80.00</span>
              <span className="w-[97px] text-[#ff00ff]">一比: 33.36</span>
              <span className="w-[16px]"><DownTick /></span>
              <span className="text-[#00e000]">二比: 45.24</span>
            </div>
            <ImeBar />
          </div>
          <TimeAxis />
          <Tabs />
        </div>
        <QuotePanel />
        <Sidebar />
      </div>
      <StatusBar />
      <Watermark />
    </div>
  );
}
